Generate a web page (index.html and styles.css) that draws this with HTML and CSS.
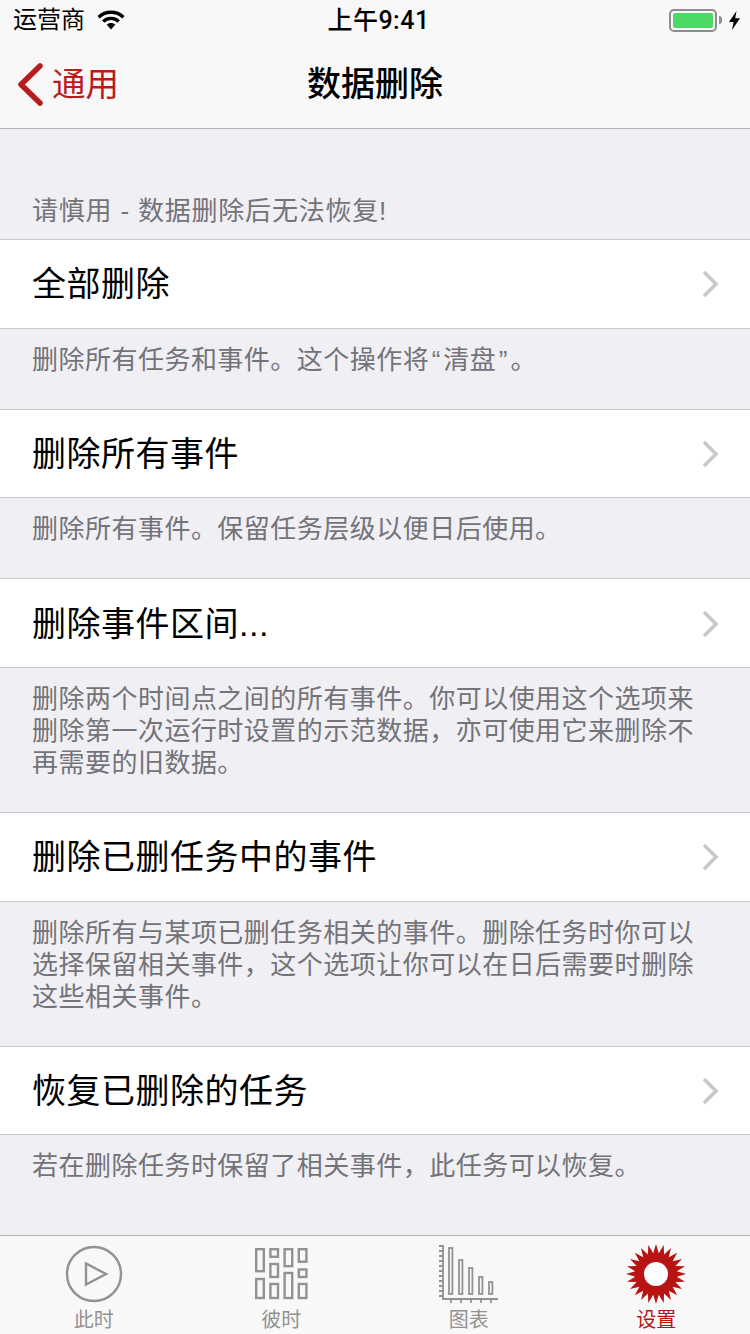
FILE: index.html
```html
<!DOCTYPE html>
<html lang="zh-CN">
<head>
<meta charset="UTF-8">
<meta name="viewport" content="width=device-width, initial-scale=1.0">
<title>数据删除</title>
<link rel="stylesheet" href="styles.css">
</head>
<body>

<div class="screen">
    <div class="top-bar">
        <div class="status-bar">
            <div class="status-left">
                <span>运营商</span>
                <svg class="wifi" width="28" height="20" viewBox="0 0 28 20">
                    <path d="M1.6 7.2C8.6 .6 19.4 .6 26.4 7.2" class="wifi-arc"/>
                    <path d="M6.2 11.4C10.6 7.4 17.4 7.4 21.8 11.4" class="wifi-arc"/>
                    <path d="M9.6 14.6C12.2 12.4 15.8 12.4 18.4 14.6L14 19.6Z" class="wifi-dot"/>
                </svg>
            </div>
            <div class="status-time">上午9:41</div>
            <div class="status-right">
                <div class="battery"><div class="battery-fill"></div></div>
                <div class="battery-nub"></div>
                <svg width="11" height="19" viewBox="0 0 11 19">
                    <path d="M7.5 0L0 11H4.6L3 19L11 7.2H6.2Z" fill="#000"/>
                </svg>
            </div>
        </div>
        <div class="nav-bar">
            <a class="nav-back">
                <svg width="26" height="43" viewBox="0 0 26 43">
                    <path d="M23 3L4 21.5L23 40" class="back-arrow"/>
                </svg>
                <span>通用</span>
            </a>
            <div class="nav-title">数据删除</div>
        </div>
    </div>

    <div class="content">
        <p class="section-header">请慎用 - 数据删除后无法恢复!</p>

        <div class="row"><span>全部删除</span><svg class="chevron" width="18" height="28" viewBox="0 0 18 28"><path d="M3 2L15 14L3 26"/></svg></div>
        <p class="row-note">删除所有任务和事件。这个操作将<span class="quote">“</span>清盘<span class="quote">”</span>。</p>

        <div class="row"><span>删除所有事件</span><svg class="chevron" width="18" height="28" viewBox="0 0 18 28"><path d="M3 2L15 14L3 26"/></svg></div>
        <p class="row-note">删除所有事件。保留任务层级以便日后使用。</p>

        <div class="row"><span>删除事件区间...</span><svg class="chevron" width="18" height="28" viewBox="0 0 18 28"><path d="M3 2L15 14L3 26"/></svg></div>
        <p class="row-note">删除两个时间点之间的所有事件。你可以使用这个选项来删除第一次运行时设置的示范数据，亦可使用它来删除不再需要的旧数据。</p>

        <div class="row"><span>删除已删任务中的事件</span><svg class="chevron" width="18" height="28" viewBox="0 0 18 28"><path d="M3 2L15 14L3 26"/></svg></div>
        <p class="row-note">删除所有与某项已删任务相关的事件。删除任务时你可以选择保留相关事件，这个选项让你可以在日后需要时删除这些相关事件。</p>

        <div class="row"><span>恢复已删除的任务</span><svg class="chevron" width="18" height="28" viewBox="0 0 18 28"><path d="M3 2L15 14L3 26"/></svg></div>
        <p class="row-note">若在删除任务时保留了相关事件，此任务可以恢复。</p>
    </div>

    <div class="tab-bar">
        <div class="tab">
            <svg class="tab-icon" width="58" height="58" viewBox="0 0 58 58">
                <circle cx="29" cy="29" r="27" class="line"/>
                <path d="M21 18.500V39.500L41 29Z" class="line"/>
            </svg>
            <span>此时</span>
        </div>
        <div class="tab">
            <svg class="tab-icon" width="54" height="58" viewBox="0 0 54 58">
                <g class="line" transform="translate(1 3)">
                    <rect x="1.200" y="1.200" width="7.600" height="22"/>
                    <rect x="1.200" y="31" width="7.600" height="19"/>
                    <rect x="15.400" y="1.200" width="7.600" height="7.600"/>
                    <rect x="15.400" y="16" width="7.600" height="13"/>
                    <rect x="15.400" y="36" width="7.600" height="14"/>
                    <rect x="29.600" y="1.200" width="7.600" height="17"/>
                    <rect x="29.600" y="25" width="7.600" height="25"/>
                    <rect x="43.800" y="1.200" width="7.600" height="12.500"/>
                    <rect x="43.800" y="21.500" width="7.600" height="7.500"/>
                    <rect x="43.800" y="36" width="7.600" height="14"/>
                </g>
            </svg>
            <span>彼时</span>
        </div>
        <div class="tab">
            <svg class="tab-icon" width="60" height="58" viewBox="0 0 60 58">
                <g class="line line-thin">
                    <path d="M4 0V54H59"/>
                    <path d="M0 1H4M0 6H4M0 11H4M0 16H4M0 21H4M0 26H4M0 31H4M0 36H4M0 41H4M0 46H4M0 51H4"/>
                    <path d="M12 54V58M22 54V58M32 54V58M42 54V58M52 54V58"/>
                    <rect x="10" y="3" width="3.400" height="46"/>
                    <rect x="20" y="15" width="3.400" height="34"/>
                    <rect x="30" y="23" width="3.400" height="26"/>
                    <rect x="40" y="32" width="3.400" height="17"/>
                    <rect x="50" y="37" width="3.400" height="12"/>
                </g>
            </svg>
            <span>图表</span>
        </div>
        <div class="tab tab-active">
            <svg class="tab-icon" width="60" height="60" viewBox="0 0 60 60">
                <polygon fill="#b81414" points="60,30 50.82,32.74 58.98,37.76 49.40,38.04 55.98,45 46.66,42.78 51.21,51.21 42.78,46.66 45,55.98 38.04,49.40 37.76,58.98 32.74,50.82 30,60 27.26,50.82 22.24,58.98 21.96,49.40 15,55.98 17.22,46.66 8.79,51.21 13.34,42.78 4.02,45 10.60,38.04 1.02,37.76 9.18,32.74 0,30 9.18,27.26 1.02,22.24 10.60,21.96 4.02,15 13.34,17.22 8.79,8.79 17.22,13.34 15,4.02 21.96,10.60 22.24,1.02 27.26,9.18 30,0 32.74,9.18 37.76,1.02 38.04,10.60 45,4.02 42.78,13.34 51.21,8.79 46.66,17.22 55.98,15 49.40,21.96 58.98,22.24 50.82,27.26"/>
                <circle cx="30" cy="30" r="12" fill="#fff"/>
            </svg>
            <span>设置</span>
        </div>
    </div>
</div>

</body>
</html>
```

FILE: styles.css
```css
body {
    margin: 0;
    padding: 0;
    font-family: "Liberation Sans", "Noto Sans CJK SC", sans-serif;
    background-color: #efeff4;
    color: #000;
}
p {
    margin: 0;
}
.screen {
    display: flex;
    flex-direction: column;
    width: 750px;
    height: 1334px;
    overflow: hidden;
}
.top-bar {
    flex: none;
    height: 128px;
    background-color: #f8f8f8;
    border-bottom: 1px solid #b2b2b2;
}
.status-bar {
    display: flex;
    align-items: center;
    justify-content: space-between;
    height: 40px;
    padding: 0 10px 0 13px;
    font-size: 24px;
    line-height: 30px;
}
.status-left {
    display: flex;
    align-items: center;
    gap: 12px;
    width: 200px;
}
.wifi-arc {
    fill: none;
    stroke: #000;
    stroke-width: 3.400;
}
.wifi-dot {
    fill: #000;
}
.status-time {
    margin-left: 4px;
    margin-top: 2px;
    font-family: Roboto, "Noto Sans CJK SC", sans-serif;
    font-size: 25px;
    font-weight: 500;
    letter-spacing: 0.500px;
}
.status-right {
    display: flex;
    align-items: center;
    justify-content: flex-end;
    width: 200px;
}
.battery {
    box-sizing: border-box;
    width: 48px;
    height: 23px;
    padding: 2px;
    border: 2px solid #8e8e8e;
    border-radius: 5px;
}
.battery-fill {
    height: 100%;
    background-color: #4cd964;
    border-radius: 2px;
}
.battery-nub {
    width: 3px;
    height: 8px;
    margin: 0 7px 0 2px;
    background-color: #8e8e8e;
    border-radius: 0 3px 3px 0;
}
.nav-bar {
    position: relative;
    display: flex;
    align-items: center;
    justify-content: center;
    height: 88px;
}
.nav-back {
    position: absolute;
    left: 17px;
    top: 23px;
    display: flex;
    align-items: center;
    gap: 9px;
    color: #b81c1c;
    font-size: 33.500px;
    line-height: 33px;
}
.nav-back span {
    margin-bottom: 1px;
}
.back-arrow {
    fill: none;
    stroke: #b81c1c;
    stroke-width: 5.500;
    stroke-linecap: round;
    stroke-linejoin: round;
}
.nav-title {
    font-size: 34px;
    line-height: 40px;
    font-weight: 500;
}
.content {
    flex: 1;
    min-height: 0;
}
.section-header {
    height: 110px;
    box-sizing: border-box;
    padding: 62px 32px 0;
    color: #737378;
    font-size: 26px;
    line-height: 40px;
    letter-spacing: 0.800px;
}
.row {
    box-sizing: border-box;
    display: flex;
    align-items: center;
    justify-content: space-between;
    height: 89.700px;
    padding: 0 31px 4px 32px;
    background-color: #fff;
    border-top: 1px solid #c8c7cc;
    border-bottom: 1px solid #c8c7cc;
    font-size: 34px;
    letter-spacing: 0.500px;
}
.chevron {
    margin-top: 5px;
}
.chevron path {
    fill: none;
    stroke: #c7c7cc;
    stroke-width: 3.600;
}
.row-note {
    padding: 15px 32px 33px;
    color: #737378;
    font-size: 26px;
    line-height: 32px;
    letter-spacing: 0.480px;
}
.quote {
    padding: 0 2.500px;
}
.tab-bar {
    flex: none;
    display: flex;
    height: 98px;
    background-color: #f8f8f8;
    border-top: 1px solid #b2b2b2;
}
.tab {
    position: relative;
    flex: 1;
    display: flex;
    flex-direction: column;
    align-items: center;
    color: #929292;
    font-size: 20px;
    line-height: 26px;
}
.tab-icon {
    height: 60px;
    margin-top: 8px;
    margin-bottom: 3px;
}
.tab-active {
    color: #b81414;
}
.line,
.line * {
    fill: none;
    stroke: #929292;
    stroke-width: 2.400;
}
.line-thin,
.line-thin * {
    stroke-width: 1.800;
}
```
